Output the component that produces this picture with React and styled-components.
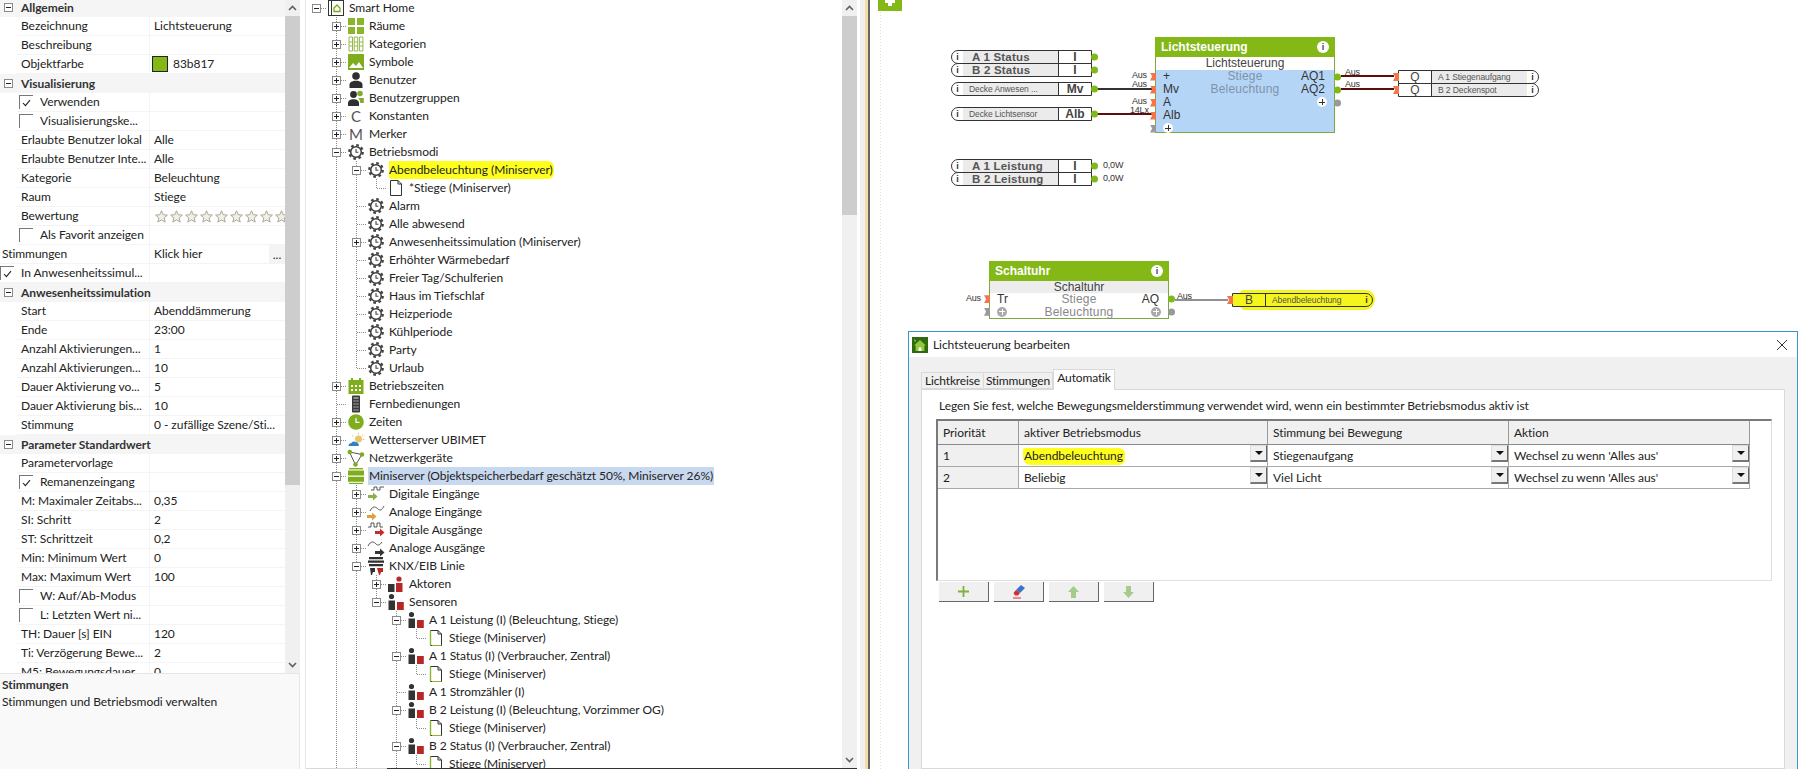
import React from "react";
import styled, { createGlobalStyle, css } from "styled-components";

const UI_FONT = `Lato, "Noto Sans", sans-serif`;
const DIAGRAM_FONT = `"Liberation Sans", Arial, sans-serif`;

const GlobalStyle = createGlobalStyle`
  html, body { margin: 0; padding: 0; background: #fff; }
  body { font-family: ${UI_FONT}; font-size: 12px; letter-spacing: -0.05px; color: #222; }
  * { box-sizing: border-box; }
`;

/* ---------- data ---------- */

const PROPS = [
  { group: "Allgemein" },
  { name: "Bezeichnung", value: "Lichtsteuerung" },
  { name: "Beschreibung" },
  { name: "Objektfarbe", value: "83b817", swatch: "#83b817" },
  { group: "Visualisierung" },
  { name: "Verwenden", check: "on" },
  { name: "Visualisierungske...", check: "off" },
  { name: "Erlaubte Benutzer lokal", value: "Alle" },
  { name: "Erlaubte Benutzer Inte...", value: "Alle" },
  { name: "Kategorie", value: "Beleuchtung" },
  { name: "Raum", value: "Stiege" },
  { name: "Bewertung", stars: 9 },
  { name: "Als Favorit anzeigen", check: "off" },
  { name: "Stimmungen", value: "Klick hier", flush: true, more: true },
  { name: "In Anwesenheitssimul...", check: "on", flush: true },
  { group: "Anwesenheitssimulation" },
  { name: "Start", value: "Abenddämmerung" },
  { name: "Ende", value: "23:00" },
  { name: "Anzahl Aktivierungen...", value: "1" },
  { name: "Anzahl Aktivierungen...", value: "10" },
  { name: "Dauer Aktivierung vo...", value: "5" },
  { name: "Dauer Aktivierung bis...", value: "10" },
  { name: "Stimmung", value: "0 - zufällige Szene/Sti..." },
  { group: "Parameter Standardwert" },
  { name: "Parametervorlage" },
  { name: "Remanenzeingang", check: "on" },
  { name: "M: Maximaler Zeitabs...", value: "0,35" },
  { name: "SI: Schritt", value: "2" },
  { name: "ST: Schrittzeit", value: "0,2" },
  { name: "Min: Minimum Wert", value: "0" },
  { name: "Max: Maximum Wert", value: "100" },
  { name: "W: Auf/Ab-Modus", check: "off" },
  { name: "L: Letzten Wert ni...", check: "off" },
  { name: "TH: Dauer [s] EIN", value: "120" },
  { name: "Ti: Verzögerung Bewe...", value: "2" },
  { name: "M5: Bewegungsdauer", value: "0" },
];

const mode = (label, extra) => ({ label, icon: "mode", ...extra });
const sensor = (label, children, cont) => ({ label, icon: "sensor", open: !!children, children, cont });
const page = { label: "Stiege (Miniserver)", icon: "docGreen" };

const TREE = {
  label: "Smart Home",
  icon: "root",
  open: true,
  children: [
    { label: "Räume", icon: "rooms", closed: true },
    { label: "Kategorien", icon: "categories", closed: true },
    { label: "Symbole", icon: "symbols", closed: true },
    { label: "Benutzer", icon: "user", closed: true },
    { label: "Benutzergruppen", icon: "users", closed: true },
    { label: "Konstanten", icon: "letterC", closed: true },
    { label: "Merker", icon: "letterM", closed: true },
    {
      label: "Betriebsmodi",
      icon: "mode",
      open: true,
      children: [
        mode("Abendbeleuchtung (Miniserver)", {
          marked: true,
          open: true,
          children: [{ label: "*Stiege (Miniserver)", icon: "doc" }],
        }),
        mode("Alarm"),
        mode("Alle abwesend"),
        mode("Anwesenheitssimulation (Miniserver)", { closed: true }),
        mode("Erhöhter Wärmebedarf"),
        mode("Freier Tag/Schulferien"),
        mode("Haus im Tiefschlaf"),
        mode("Heizperiode"),
        mode("Kühlperiode"),
        mode("Party"),
        mode("Urlaub"),
      ],
    },
    { label: "Betriebszeiten", icon: "calendar", closed: true },
    { label: "Fernbedienungen", icon: "remote" },
    { label: "Zeiten", icon: "clock", closed: true },
    { label: "Wetterserver UBIMET", icon: "weather", closed: true },
    { label: "Netzwerkgeräte", icon: "network", closed: true },
    {
      label: "Miniserver (Objektspeicherbedarf geschätzt 50%, Miniserver 26%)",
      icon: "miniserver",
      selected: true,
      open: true,
      cont: true,
      children: [
        { label: "Digitale Eingänge", icon: "digitalIn", closed: true },
        { label: "Analoge Eingänge", icon: "analogIn", closed: true },
        { label: "Digitale Ausgänge", icon: "digitalOut", closed: true },
        { label: "Analoge Ausgänge", icon: "analogOut", closed: true },
        {
          label: "KNX/EIB Linie",
          icon: "knx",
          open: true,
          cont: true,
          children: [
            { label: "Aktoren", icon: "actor", closed: true },
            {
              label: "Sensoren",
              icon: "sensor",
              open: true,
              children: [
                sensor("A 1 Leistung (I) (Beleuchtung, Stiege)", [page]),
                sensor("A 1 Status (I) (Verbraucher, Zentral)", [page]),
                sensor("A 1 Stromzähler (I)"),
                sensor("B 2 Leistung (I) (Beleuchtung, Vorzimmer OG)", [page]),
                sensor("B 2 Status (I) (Verbraucher, Zentral)", [page], true),
              ],
            },
          ],
        },
      ],
    },
  ],
};

const flatten = (node, prefix = [], isLast = false, isRoot = true) => {
  const row = { ...node, prefix, kind: isRoot ? "root" : isLast && !node.cont ? "last" : "tee" };
  const kids = node.children || [];
  const nextPrefix = isRoot ? [false] : [...prefix, !isLast || !!node.cont];
  return [row, ...kids.flatMap((k, i) => flatten(k, nextPrefix, i === kids.length - 1, false))];
};

const TREE_ROWS = flatten(TREE);

/* ---------- tree icons ---------- */

const GearClock = () => (
  <>
    <circle cx="9" cy="9" r="6.8" fill="none" stroke="#444" strokeWidth="2.2" strokeDasharray="2.7 2.64" />
    <circle cx="9" cy="9" r="5.3" fill="#fff" stroke="#3a3a3a" strokeWidth="1.5" />
    <path d="M9 6v3.2h2.4" fill="none" stroke="#444" strokeWidth="1.1" />
  </>
);

const ICONS = {
  root: (
    <>
      <rect x="1.5" y="1.5" width="15" height="15" fill="#fff" stroke="#333" />
      <rect x="4" y="1.5" width="1" height="15" fill="#333" />
      <path d="M7 9l3-3 3 3v3.5H7z" fill="#fff" stroke="#7aa81c" strokeWidth="1.3" />
    </>
  ),
  rooms: (
    <path d="M1 1h7v7H1zM10 1h7v7h-7zM1 10h7v7H1zM10 10h7v7h-7z" fill="#8ab52c" />
  ),
  categories: (
    <path d="M2 2h3.5v14H2zM7.2 2h3.5v14H7.2zM12.4 2h3.5v14h-3.5zM2 7h3.5M2 11h3.5M7.2 7h3.5M7.2 11h3.5M12.4 7h3.5M12.4 11h3.5" fill="none" stroke="#95b84e" />
  ),
  symbols: (
    <>
      <rect x="1" y="1" width="16" height="16" fill="#7fad1e" />
      <path d="M2 15l4-5 3 3 3-4 4 6z" fill="#fff" />
    </>
  ),
  user: (
    <>
      <circle cx="9" cy="5" r="3.8" fill="#2f2f2f" />
      <path d="M2.5 17v-3.2c0-2.4 2.6-4 6.5-4s6.5 1.6 6.5 4V17z" fill="#2f2f2f" />
    </>
  ),
  users: (
    <>
      <circle cx="6.5" cy="5.5" r="3.4" fill="#2f2f2f" />
      <path d="M1 17v-3c0-2.2 2.4-3.7 5.5-3.7s5.5 1.5 5.5 3.7v3z" fill="#2f2f2f" />
      <circle cx="13" cy="4.5" r="2.8" fill="#82ab2e" />
      <path d="M11 9h5.8v5h-3.6c0-2-.6-3.6-2.2-5z" fill="#82ab2e" />
    </>
  ),
  mode: <GearClock />,
  doc: (
    <path d="M3.5 1.5h7.5l3.5 3.5v11.5h-11zM11 1.5V5h3.5" fill="#fff" stroke="#333" />
  ),
  docGreen: (
    <>
      <path d="M3.5 1.5h7.5l3.5 3.5v11.5h-11zM11 1.5V5h3.5" fill="#fff" stroke="#333" />
      <path d="M3.5 1.5v15" stroke="#8ab52c" strokeWidth="1.4" />
      <path d="M5 16.5h9" stroke="#8ab52c" />
    </>
  ),
  calendar: (
    <>
      <rect x="1.5" y="3" width="15" height="14" fill="#7fad1e" />
      <path d="M5 1v3M13 1v3" stroke="#7fad1e" strokeWidth="2" />
      <path d="M4 8h2v2H4zM8 8h2v2H8zM12 8h2v2h-2zM4 12h2v2H4zM8 12h2v2H8zM12 12h2v2h-2z" fill="#fff" />
    </>
  ),
  remote: (
    <>
      <rect x="5" y="0.5" width="8" height="17" rx="0.8" fill="#3a3a3a" />
      <path d="M6.5 3h5M6.5 6h1.2M8.4 6h1.2M10.3 6h1.2M6.5 9h1.2M8.4 9h1.2M10.3 9h1.2M6.5 12h1.2M8.4 12h1.2M10.3 12h1.2M6.5 15h1.2M8.4 15h1.2M10.3 15h1.2" stroke="#ddd" />
    </>
  ),
  clock: (
    <>
      <circle cx="9" cy="9" r="7.8" fill="#7fad1e" />
      <path d="M9 5v4.4h3.4" fill="none" stroke="#fff" strokeWidth="1.2" />
    </>
  ),
  weather: (
    <>
      <circle cx="11.5" cy="8" r="3.5" fill="#e8c56a" />
      <path d="M11.5 2v1.5M16.5 4l-1.2 1M17.5 8.5h-1.7M5 4.5l1.2 1" stroke="#e8c56a" />
      <path d="M1.5 15c0-2 1.5-3 3-3 .8-1.6 3-2 4.3-.8 1.9-.3 3.2 1.4 2.9 3.8z" fill="#2f80c4" />
    </>
  ),
  network: (
    <>
      <path d="M2.5 3l12.5 2.5-6.5 10.5z" fill="none" stroke="#555" />
      <circle cx="2.8" cy="3" r="2.3" fill="#7fad1e" />
      <circle cx="15" cy="5.5" r="2.3" fill="#7fad1e" />
      <circle cx="8.5" cy="15.5" r="2.3" fill="#7fad1e" />
    </>
  ),
  miniserver: (
    <>
      <path d="M2 1h14v1.4H2z" fill="#7fad1e" />
      <path d="M1 3.5h16v5H1zM1 9.7h16v5H1z" fill="#7fad1e" />
      <path d="M2 15.8h14v1.2H2z" fill="#7fad1e" />
    </>
  ),
  digitalIn: (
    <>
      <path d="M4 5h3V2h3v3h3V2h4" fill="none" stroke="#555" />
      <path d="M1 10h5V7.5l4.5 4-4.5 4V13H1z" fill="#8cb042" />
    </>
  ),
  analogIn: (
    <>
      <path d="M3 8c3-6 6-4 8-2s4 1 6-3" fill="none" stroke="#555" />
      <path d="M0 12h5V9.5l4.5 4-4.5 4V15H0z" fill="#dda23a" />
    </>
  ),
  digitalOut: (
    <>
      <path d="M1 6h3V2h3v4h3V2h3v4h3" fill="none" stroke="#555" />
      <path d="M8 10h5V7.5l4.5 4-4.5 4V13H8z" fill="#c62c2c" />
    </>
  ),
  analogOut: (
    <>
      <path d="M1 7c3-6 6-4 8-2s4 1 6-2" fill="none" stroke="#555" />
      <path d="M8 12h5V9.5l4.5 4-4.5 4V15H8z" fill="#333" />
    </>
  ),
  knx: (
    <>
      <path d="M2 0h14v2.2H2zM1 3.4h16v2.4H1zM2 7h14v2.2H2z" fill="#2f2f2f" />
      <path d="M3 11h5v4H6l-1 3H4z" fill="#2f2f2f" />
      <path d="M10 11h6v4h-2l-1 3h-1z" fill="#b82626" />
    </>
  ),
  actor: (
    <>
      <path d="M1 9h6.5v8H1z" fill="#333" />
      <circle cx="12" cy="4" r="2.6" fill="#b82626" />
      <path d="M9 8h6.5v9H9z" fill="#b82626" />
    </>
  ),
  sensor: (
    <>
      <circle cx="4.5" cy="3.5" r="2.6" fill="#333" />
      <path d="M1.5 7.5H8V17H1.5z" fill="#333" />
      <path d="M10 9h6.8v8H10z" fill="#b82626" />
    </>
  ),
};

const Svg = styled.svg`
  display: block;
  flex: none;
`;

const TreeIcon = ({ name }) => {
  if (name === "letterC" || name === "letterM") {
    return <IconLetter>{name === "letterC" ? "C" : "M"}</IconLetter>;
  }
  return (
    <IconCell>
      <Svg width="18" height="18" viewBox="0 0 18 18">
        {ICONS[name]}
      </Svg>
    </IconCell>
  );
};

/* ---------- left panel ---------- */

const Page = styled.div`
  width: 1798px;
  height: 769px;
  display: flex;
  overflow: hidden;
  background: #fff;
`;

const LeftPane = styled.div`
  width: 306px;
  flex: none;
  border-right: 1px solid #e6e6e6;
  padding-right: 5px;
  display: flex;
  flex-direction: column;
`;

const PropsArea = styled.div`
  height: 673px;
  display: flex;
`;

const PropsList = styled.div`
  width: 285px;
  overflow: hidden;
`;

const PropsInner = styled.div`
  margin-top: -2px;
`;

const PropRow = styled.div`
  height: 19px;
  display: grid;
  grid-template-columns: 17px 132px 1fr;
  align-items: center;
  line-height: 18px;
  white-space: nowrap;
  ${(p) =>
    p.$group &&
    css`
      background: #f5f5f5;
      font-weight: 700;
      color: #333;
      grid-template-columns: 17px 1fr;
    `}
`;

const PropName = styled.div`
  height: 19px;
  padding-left: ${(p) => (p.$check ? "2px" : "4px")};
  display: flex;
  align-items: center;
  gap: 7px;
  border-bottom: 1px solid #f4f4f4;
  overflow: hidden;
  ${(p) =>
    p.$flush &&
    css`
      grid-column: 1 / 3;
      padding-left: ${p.$check ? "0" : "2px"};
    `}
`;

const PropValue = styled.div`
  height: 19px;
  padding-left: 4px;
  border-left: 1px solid #f4f4f4;
  border-bottom: 1px solid #f4f4f4;
  display: flex;
  align-items: center;
  gap: 5px;
  overflow: hidden;
`;

const GroupTitle = styled.div`
  padding-left: 4px;
`;

const Gutter = styled.div`
  display: flex;
  align-items: center;
  padding-left: 3px;
`;

const Swatch = styled.span`
  width: 16px;
  height: 16px;
  margin-left: -2px;
  flex: none;
  border: 1px solid #222;
  background: ${(p) => p.$color};
`;

const MoreButton = styled.span`
  margin-left: auto;
  width: 16px;
  height: 19px;
  background: #f4f4f4;
  line-height: 20px;
  text-align: center;
`;

const Stars = styled.div`
  display: flex;
  gap: 2px;
  margin-left: 1px;
`;

const CheckBox = styled.span`
  width: 14px;
  height: 14px;
  flex: none;
  border-top: 1px solid #777;
  border-left: 1px solid #777;
  display: flex;
  align-items: center;
  justify-content: center;
`;

const Tick = () => (
  <Svg width="9" height="8" viewBox="0 0 9 8">
    <path d="M1 4l2.4 2.6L8 1.2" fill="none" stroke="#222" strokeWidth="1.1" />
  </Svg>
);

const Star = () => (
  <Svg width="13" height="13" viewBox="0 0 13 13">
    <path
      d="M6.5.8l1.7 3.9 4.2.4-3.2 2.8 1 4.2-3.7-2.2-3.7 2.2 1-4.2L.6 5.1l4.2-.4z"
      fill="#f1efe6"
      stroke="#aaa89a"
    />
  </Svg>
);

const ScrollTrack = styled.div`
  width: 15px;
  flex: none;
  height: 100%;
  background: #f0f0f0;
  display: flex;
  flex-direction: column;
`;

const ScrollArrow = styled.div`
  height: 16px;
  flex: none;
  display: flex;
  align-items: center;
  justify-content: center;
  margin-top: ${(p) => (p.$end ? "auto" : "0")};
`;

const ScrollThumb = styled.div`
  height: ${(p) => p.$h}px;
  background: #cdcdcd;
`;

const Chevron = ({ up }) => (
  <Svg width="9" height="6" viewBox="0 0 9 6">
    <path d={up ? "M1 5l3.5-3.5L8 5" : "M1 1l3.5 3.5L8 1"} fill="none" stroke="#606060" strokeWidth="1.6" />
  </Svg>
);

const Scrollbar = ({ thumb }) => (
  <ScrollTrack>
    <ScrollArrow>
      <Chevron up />
    </ScrollArrow>
    <ScrollThumb $h={thumb} />
    <ScrollArrow $end>
      <Chevron />
    </ScrollArrow>
  </ScrollTrack>
);

const DescBox = styled.div`
  flex: 1;
  width: 300px;
  background: #f9f9f9;
  border-top: 1px solid #e6e6e6;
  border-right: 1px solid #e6e6e6;
  padding: 2px 2px;
  line-height: 17px;
`;

const DescTitle = styled.div`
  font-weight: 700;
  color: #333;
`;

/* ---------- tree ---------- */

const dotsV = "repeating-linear-gradient(to bottom,#8c8c8c 0 1px,transparent 1px 2px)";
const dotsH = "repeating-linear-gradient(to right,#8c8c8c 0 1px,transparent 1px 2px)";

const guideStyles = {
  blank: css``,
  pipe: css`
    background: ${dotsV} no-repeat 10px 0 / 1px 100%;
  `,
  tee: css`
    background:
      ${dotsV} no-repeat 10px 0 / 1px 100%,
      ${dotsH} no-repeat 11px 9px / 9px 1px;
  `,
  last: css`
    background:
      ${dotsV} no-repeat 10px 0 / 1px 9px,
      ${dotsH} no-repeat 11px 9px / 9px 1px;
  `,
  root: css`
    background: ${dotsH} no-repeat 11px 9px / 9px 1px;
  `,
};

const TreePane = styled.div`
  width: 551px;
  flex: none;
  display: flex;
  height: 769px;
  border-bottom: 1px solid;
  border-image: linear-gradient(to right, #d8d8d8 0 82px, #333 82px) 1;
`;

const TreeList = styled.div`
  flex: 1;
  overflow: hidden;
`;

const TreeInner = styled.div`
  margin-top: -1px;
`;

const TreeRow = styled.div`
  height: 18px;
  display: flex;
  align-items: center;
  white-space: nowrap;
`;

const Guide = styled.div`
  width: 20px;
  height: 18px;
  flex: none;
  display: flex;
  align-items: center;
  justify-content: center;
  ${(p) => guideStyles[p.$kind]}
`;

const Expander = styled.span`
  width: 9px;
  height: 9px;
  margin-left: 1px;
  border: 1px solid #8a8a8a;
  background-color: #fff;
  background-image: linear-gradient(#222, #222)
    ${(p) => (p.$closed ? ", linear-gradient(#222, #222)" : "")};
  background-repeat: no-repeat;
  background-position: center, center;
  background-size: 5px 1px ${(p) => (p.$closed ? ", 1px 5px" : "")};
`;

const IconCell = styled.div`
  width: 20px;
  height: 18px;
  flex: none;
  display: flex;
  align-items: center;
  justify-content: center;
`;

const IconLetter = styled(IconCell)`
  font-size: 15px;
  color: #555;
`;

const TreeLabel = styled.span`
  margin-left: 3px;
  line-height: 18px;
  ${(p) =>
    p.$selected &&
    css`
      background: #c8d8ef;
      margin-left: 2px;
      padding: 0 1px;
    `}
  ${(p) =>
    p.$marked &&
    css`
      background: #ffff1e;
      border-radius: 0 6px 6px 3px;
      margin-left: 3px;
      padding-right: 1px;
    `}
`;

const Splitter = styled.div`
  width: 14px;
  flex: none;
  background: linear-gradient(
    to right,
    #fff 0 3px,
    #f0f0f0 3px 8px,
    #f6dca6 8px 11px,
    #666 11px 13px,
    #fff 13px
  );
`;

/* ---------- right side: diagram ---------- */

const RightPane = styled.div`
  flex: 1;
  height: 769px;
  display: flex;
  flex-direction: column;
  overflow: hidden;
  background: repeating-linear-gradient(to bottom, #cfe6dc 0 1px, transparent 1px 3px) no-repeat 9px 0 / 1px 100%;
`;

const Canvas = styled.div`
  position: relative;
  height: 331px;
  flex: none;
  font-family: ${DIAGRAM_FONT};
  letter-spacing: 0;
`;

const AddButton = styled.div`
  position: absolute;
  left: 7px;
  top: 0;
  width: 24px;
  height: 11px;
  background: #83b817;
  overflow: hidden;
  display: flex;
  justify-content: center;
`;

const AddCross = styled.span`
  width: 10px;
  height: 6px;
  background:
    linear-gradient(#fff, #fff) center 0 / 4px 6px no-repeat,
    linear-gradient(#fff, #fff) center 0 / 10px 3px no-repeat;
`;

const Wires = styled.svg`
  position: absolute;
  left: 0;
  top: 0;
`;

const Note = styled.span`
  position: absolute;
  left: ${(p) => p.$x}px;
  top: ${(p) => p.$y}px;
  font-size: 9px;
  line-height: 10px;
  color: #333;
  letter-spacing: -0.2px;
`;

const RefBox = styled.div`
  position: absolute;
  left: ${(p) => p.$x}px;
  top: ${(p) => p.$y}px;
  width: 141px;
  height: ${(p) => p.$h || 14}px;
  display: flex;
  flex-direction: ${(p) => (p.$out ? "row-reverse" : "row")};
  border: 1px solid #333;
  border-radius: ${(p) => (p.$out ? "0 8px 8px 0" : "8px 0 0 8px")};
  background: ${(p) => (p.$mark ? "#f4f41e" : "#fff")};
`;

const RefCap = styled.div`
  width: 11px;
  flex: none;
  display: flex;
  align-items: center;
  justify-content: center;
  font-size: 9px;
  font-weight: 700;
  color: #333;
`;

const RefName = styled.div`
  flex: 1;
  min-width: 0;
  background: ${(p) => (p.$mark ? "transparent" : "#ebebeb")};
  padding-left: ${(p) => (p.$big ? 9 : 6)}px;
  font-size: ${(p) => (p.$big ? 11.5 : 8.5)}px;
  font-weight: ${(p) => (p.$big ? 700 : 400)};
  letter-spacing: ${(p) => (p.$big ? "0.2px" : "-0.1px")};
  color: #555;
  line-height: 12px;
  white-space: nowrap;
  overflow: hidden;
`;

const RefCode = styled.div`
  width: 33px;
  flex: none;
  border-left: 1px solid #333;
  text-align: center;
  font-size: 12px;
  font-weight: ${(p) => (p.$light ? 400 : 700)};
  line-height: 12px;
  color: #444;
  ${(p) =>
    p.$out &&
    css`
      border-left: none;
      border-right: 1px solid #333;
    `}
`;

const pinColor = { green: "#7fb81c", gray: "#999", orange: "#f2764a", grayTag: "#999" };

const Pin = styled.span`
  position: absolute;
  width: ${(p) => (p.$kind === "orange" || p.$kind === "grayTag" ? 6 : 7)}px;
  height: ${(p) => (p.$kind === "orange" || p.$kind === "grayTag" ? 8 : 7)}px;
  top: 50%;
  transform: translateY(-50%);
  background: ${(p) => pinColor[p.$kind]};
  ${(p) => (p.$side === "left" ? "left: -6px;" : "right: -7px;")}
  ${(p) =>
    p.$kind === "orange" || p.$kind === "grayTag"
      ? "clip-path: polygon(0 0, 100% 0, 100% 100%, 0 100%, 35% 50%);"
      : "border-radius: 50%;"}
`;

const Reference = ({ x, y, h, out, name, big, code, pin, mark, light }) => (
  <RefBox $x={x} $y={y} $h={h} $out={out} $mark={mark}>
    <RefCap>i</RefCap>
    <RefName $big={big} $mark={mark}>
      {name}
    </RefName>
    <RefCode $out={out} $light={light}>
      {code}
    </RefCode>
    <Pin $kind={pin} $side={out ? "left" : "right"} />
  </RefBox>
);

const BlockBox = styled.div`
  position: absolute;
  left: ${(p) => p.$x}px;
  top: ${(p) => p.$y}px;
  width: 180px;
  height: ${(p) => p.$h}px;
  border: 1px solid #7fa83a;
  background: ${(p) => p.$body};
  display: flex;
  flex-direction: column;
`;

const BlockHead = styled.div`
  height: 20px;
  flex: none;
  margin: -1px -1px 0;
  padding: 0 6px;
  background: #83b817;
  color: #fff;
  font-size: 12px;
  font-weight: 700;
  display: flex;
  align-items: center;
  justify-content: space-between;
`;

const InfoDot = styled.span`
  width: 12px;
  height: 12px;
  border-radius: 50%;
  background: #fff;
  color: #444;
  font-size: 9px;
  line-height: 12px;
  text-align: center;
`;

const BlockSub = styled.div`
  height: ${(p) => p.$h}px;
  flex: none;
  background: ${(p) => p.$bg};
  text-align: center;
  font-size: 12px;
  line-height: ${(p) => p.$h}px;
  color: #444;
`;

const BlockRow = styled.div`
  position: relative;
  height: ${(p) => p.$h}px;
  flex: none;
  display: grid;
  grid-template-columns: 40px 1fr 40px;
  align-items: center;
  font-size: 12px;
  line-height: ${(p) => p.$h}px;
  color: #333;
`;

const Left = styled.span`
  padding-left: 7px;
`;

const Mid = styled.span`
  text-align: center;
  color: ${(p) => p.$color};
  letter-spacing: 0.2px;
`;

const Right = styled.span`
  text-align: right;
  padding-right: 9px;
`;

const PlusDot = styled.span`
  display: inline-block;
  width: 10px;
  height: 10px;
  border-radius: 50%;
  vertical-align: -1px;
  margin-right: ${(p) => (p.$end ? -2 : 0)}px;
  background:
    linear-gradient(${(p) => p.$cross}, ${(p) => p.$cross}) center / 6px 1px no-repeat,
    linear-gradient(${(p) => p.$cross}, ${(p) => p.$cross}) center / 1px 6px no-repeat,
    ${(p) => p.$color};
`;

const Block = ({ x, y, h, title, sub, subBg, body, midColor, dot, cross, rowH, rows }) => (
  <BlockBox $x={x} $y={y} $h={h} $body={body}>
    <BlockHead>
      {title}
      <InfoDot>i</InfoDot>
    </BlockHead>
    <BlockSub $h={subBg === "#fff" ? 13 : 12} $bg={subBg}>
      {sub}
    </BlockSub>
    {rows.map((r, i) => (
      <BlockRow key={i} $h={rowH}>
        {r.lp && <Pin $kind={r.lp} $side="left" />}
        <Left>{r.l === "+dot" ? <PlusDot $color={dot} $cross={cross} /> : r.l}</Left>
        <Mid $color={midColor}>{r.m}</Mid>
        <Right>{r.r === "+dot" ? <PlusDot $end $color={dot} $cross={cross} /> : r.r}</Right>
        {r.rp && <Pin $kind={r.rp} $side="right" />}
      </BlockRow>
    ))}
  </BlockBox>
);

const MarkerBlob = styled.div`
  position: absolute;
  left: 369px;
  top: 290px;
  width: 135px;
  height: 20px;
  background: #f4f41e;
  border-radius: 4px 10px 12px 6px;
`;

const Diagram = () => (
  <Canvas>
    <AddButton>
      <AddCross />
    </AddButton>
    <Wires width="927" height="331">
      <path d="M225 89h56" stroke="#333" strokeWidth="2" />
      <path d="M225 114h56" stroke="#5e0d0d" strokeWidth="2" />
      <path d="M470 76h53M470 89h53" stroke="#5e0d0d" strokeWidth="2" />
      <path d="M304 300h53" stroke="#222" strokeWidth="1" />
    </Wires>

    <Reference x={80} y={50} name="A 1 Status" big code="I" pin="green" />
    <Reference x={80} y={63} name="B 2 Status" big code="I" pin="green" />
    <Reference x={80} y={82} name="Decke Anwesen ..." code="Mv" pin="green" />
    <Reference x={80} y={107} name="Decke Lichtsensor" code="Alb" pin="green" />
    <Reference x={80} y={159} name="A 1 Leistung" big code="I" pin="green" />
    <Reference x={80} y={172} name="B 2 Leistung" big code="I" pin="green" />
    <Note $x={232} $y={160}>0,0W</Note>
    <Note $x={232} $y={173}>0,0W</Note>

    <Note $x={261} $y={70}>Aus</Note>
    <Note $x={261} $y={79}>Aus</Note>
    <Note $x={261} $y={96}>Aus</Note>
    <Note $x={259} $y={105}>14Lx</Note>

    <Block
      x={284}
      y={37}
      h={96}
      title="Lichtsteuerung"
      sub="Lichtsteuerung"
      subBg="#fff"
      body="#b5d5f7"
      midColor="#7f93a8"
      dot="#fff"
      cross="#333"
      rowH={13}
      rows={[
        { l: "+", m: "Stiege", r: "AQ1", lp: "orange", rp: "green" },
        { l: "Mv", m: "Beleuchtung", r: "AQ2", lp: "orange", rp: "green" },
        { l: "A", r: "+dot", lp: "orange", rp: "gray" },
        { l: "Alb", lp: "orange" },
        { l: "+dot", lp: "grayTag" },
      ]}
    />
    <Note $x={474} $y={67}>Aus</Note>
    <Note $x={474} $y={79}>Aus</Note>

    <Reference x={527} y={70} out light name="A 1 Stiegenaufgang" code="Q" pin="orange" />
    <Reference x={527} y={83} out light name="B 2 Deckenspot" code="Q" pin="orange" />

    <Note $x={95} $y={293}>Aus</Note>
    <Block
      x={118}
      y={261}
      h={58}
      title="Schaltuhr"
      sub="Schaltuhr"
      subBg="#ededed"
      body="#fff"
      midColor="#888"
      dot="#aaa"
      cross="#fff"
      rowH={12.5}
      rows={[
        { l: "Tr", m: "Stiege", r: "AQ", lp: "orange", rp: "green" },
        { l: "+dot", m: "Beleuchtung", r: "+dot", lp: "grayTag", rp: "gray" },
      ]}
    />
    <Note $x={306} $y={291}>Aus</Note>

    <MarkerBlob />
    <Reference x={361} y={293} h={14} out light mark name="Abendbeleuchtung" code="B" pin="orange" />
  </Canvas>
);

/* ---------- dialog ---------- */

const Dialog = styled.div`
  margin-left: 37px;
  flex: 1;
  min-height: 0;
  background: #f0f0f0;
  border: 1px solid #3a96c8;
  border-bottom: none;
  display: flex;
  flex-direction: column;
`;

const DialogTitle = styled.div`
  height: 25px;
  flex: none;
  background: #fff;
  padding: 0 9px 0 3px;
  display: flex;
  align-items: center;
  gap: 5px;
`;

const CloseMark = styled.svg`
  margin-left: auto;
`;

const TabStrip = styled.div`
  display: flex;
  align-items: flex-end;
  height: 32px;
  flex: none;
  padding-left: 12px;
`;

const Tab = styled.div`
  width: ${(p) => p.$w}px;
  height: ${(p) => (p.$active ? 21 : 17)}px;
  text-align: center;
  letter-spacing: -0.15px;
  line-height: 16px;
  background: ${(p) => (p.$active ? "#fff" : "#f0f0f0")};
  border: 1px solid #d9d9d9;
  border-left: ${(p) => (p.$first || p.$active ? "1px solid #d9d9d9" : "none")};
  border-bottom: ${(p) => (p.$active ? "none" : "1px solid #d9d9d9")};
  position: relative;
  top: ${(p) => (p.$active ? 1 : 0)}px;
`;

const TabPage = styled.div`
  flex: 1;
  margin: 0 12px;
  background: #fff;
  border: 1px solid #d9d9d9;
  padding: 7px 12px 0 14px;
`;

const Legend = styled.div`
  margin-left: 3px;
  height: 22px;
  line-height: 17px;
`;

const TableFrame = styled.div`
  height: 162px;
  border-top: 2px solid #7a7a7a;
  border-left: 2px solid #7a7a7a;
  border-right: 1px solid #dfdfdf;
  border-bottom: 1px solid #dfdfdf;
`;

const TableGrid = styled.div`
  display: grid;
  grid-template-columns: 81px 249px 241px 241px;
  grid-template-rows: 24px 22px 22px;
  width: fit-content;
`;

const HeadCell = styled.div`
  background: #f0f0f0;
  border-right: 1px solid #9a9a9a;
  border-bottom: 1px solid #8a8a8a;
  padding-left: 5px;
  line-height: 24px;
`;

const Cell = styled.div`
  background: ${(p) => (p.$fixed ? "#f0f0f0" : "#fff")};
  border-right: 1px solid #a8a8a8;
  border-bottom: 1px solid #a8a8a8;
  padding-left: 5px;
  line-height: 22px;
  display: flex;
  justify-content: space-between;
  white-space: nowrap;
`;

const TableRow = styled.div`
  display: contents;
`;

const Marked = styled.span`
  background: #ffff1e;
  margin-left: -1px;
  padding: 0 2px 0 1px;
  height: 17px;
  margin-top: 3px;
  line-height: 15px;
  border-radius: 2px 6px 6px 8px;
`;

const Dropdown = styled.span`
  width: 17px;
  height: 17px;
  flex: none;
  background: #f0f0f0;
  border-right: 1px solid #666;
  border-bottom: 2px solid #777;
  border-left: 1px solid #ddd;
  border-top: 1px solid #ddd;
  display: flex;
  align-items: center;
  justify-content: center;
  &::after {
    content: "";
    border-left: 4px solid transparent;
    border-right: 4px solid transparent;
    border-top: 4px solid #111;
  }
`;

const ButtonBar = styled.div`
  display: flex;
  gap: 5px;
  margin-left: 3px;
  margin-top: 1px;
`;

const ToolButton = styled.div`
  width: 50px;
  height: 20px;
  background: #f0f0f0;
  border-right: 1px solid #666;
  border-bottom: 1px solid #666;
  display: flex;
  align-items: center;
  justify-content: center;
`;

const TABLE = [
  { p: "1", mode: "Abendbeleuchtung", mood: "Stiegenaufgang", marked: true },
  { p: "2", mode: "Beliebig", mood: "Viel Licht" },
];

const SettingsDialog = () => (
  <Dialog>
    <DialogTitle>
      <Svg width="16" height="16" viewBox="0 0 16 16">
        <rect width="16" height="16" fill="#2f6a0e" />
        <path d="M8 3l6 5.5h-1.6V14H3.6V8.5H2z" fill="#8fc83a" />
        <path d="M6.6 14v-3.5h2.8V14z" fill="#fff" />
        <path d="M2 2l2 2-1 1z" fill="#c9e38a" />
      </Svg>
      Lichtsteuerung bearbeiten
      <CloseMark width="12" height="12" viewBox="0 0 12 12">
        <path d="M1 1l10 10M11 1L1 11" stroke="#333" strokeWidth="1" />
      </CloseMark>
    </DialogTitle>
    <TabStrip>
      <Tab $first $w={63}>Lichtkreise</Tab>
      <Tab $w={69}>Stimmungen</Tab>
      <Tab $active $w={62}>Automatik</Tab>
    </TabStrip>
    <TabPage>
      <Legend>
        Legen Sie fest, welche Bewegungsmelderstimmung verwendet wird, wenn ein bestimmter Betriebsmodus aktiv ist
      </Legend>
      <TableFrame>
        <TableGrid>
          <TableRow>
            <HeadCell>Priorität</HeadCell>
            <HeadCell>aktiver Betriebsmodus</HeadCell>
            <HeadCell>Stimmung bei Bewegung</HeadCell>
            <HeadCell>Aktion</HeadCell>
          </TableRow>
          {TABLE.map((row) => (
            <TableRow key={row.p}>
              <Cell $fixed>{row.p}</Cell>
              <Cell>
                {row.marked ? <Marked>{row.mode}</Marked> : row.mode}
                <Dropdown />
              </Cell>
              <Cell>
                {row.mood}
                <Dropdown />
              </Cell>
              <Cell>
                Wechsel zu wenn 'Alles aus'
                <Dropdown />
              </Cell>
            </TableRow>
          ))}
        </TableGrid>
      </TableFrame>
      <ButtonBar>
        <ToolButton>
          <Svg width="13" height="13" viewBox="0 0 13 13">
            <path d="M6.5 1v11M1 6.5h11" stroke="#7fb23a" strokeWidth="1.8" />
          </Svg>
        </ToolButton>
        <ToolButton>
          <Svg width="16" height="15" viewBox="0 0 16 15">
            <path d="M5 6l5-5 4 3-5 5z" fill="#3a72c8" />
            <path d="M5 6l4 3-2 2.5H4L2.5 9z" fill="#d82b35" />
            <path d="M2 14h8" stroke="#d82b35" />
          </Svg>
        </ToolButton>
        <ToolButton>
          <Svg width="13" height="14" viewBox="0 0 13 14">
            <path d="M6.5 1l5.5 6H9v6H4V7H1z" fill="#a5cc8a" />
          </Svg>
        </ToolButton>
        <ToolButton>
          <Svg width="13" height="14" viewBox="0 0 13 14">
            <path d="M6.5 13L12 7H9V1H4v6H1z" fill="#a5cc8a" />
          </Svg>
        </ToolButton>
      </ButtonBar>
    </TabPage>
  </Dialog>
);

/* ---------- page ---------- */

const PropertyRow = ({ row }) => {
  if (row.group) {
    return (
      <PropRow $group>
        <Gutter>
          <Expander />
        </Gutter>
        <GroupTitle>{row.group}</GroupTitle>
      </PropRow>
    );
  }
  return (
    <PropRow>
      {!row.flush && <div />}
      <PropName $check={!!row.check} $flush={row.flush}>
        {row.check && <CheckBox>{row.check === "on" && <Tick />}</CheckBox>}
        {row.name}
      </PropName>
      <PropValue>
        {row.swatch && <Swatch $color={row.swatch} />}
        {row.stars ? (
          <Stars>
            {Array.from({ length: row.stars }, (_, i) => (
              <Star key={i} />
            ))}
          </Stars>
        ) : (
          row.value
        )}
        {row.more && <MoreButton>...</MoreButton>}
      </PropValue>
    </PropRow>
  );
};

export default function App() {
  return (
    <>
      <GlobalStyle />
      <Page>
        <LeftPane>
          <PropsArea>
            <PropsList>
              <PropsInner>
                {PROPS.map((row, i) => (
                  <PropertyRow key={i} row={row} />
                ))}
              </PropsInner>
            </PropsList>
            <Scrollbar thumb={469} />
          </PropsArea>
          <DescBox>
            <DescTitle>Stimmungen</DescTitle>
            Stimmungen und Betriebsmodi verwalten
          </DescBox>
        </LeftPane>

        <TreePane>
          <TreeList>
            <TreeInner>
              {TREE_ROWS.map((row, i) => (
                <TreeRow key={i}>
                  {row.prefix.map((on, j) => (
                    <Guide key={j} $kind={on ? "pipe" : "blank"} />
                  ))}
                  <Guide $kind={row.kind}>
                    {(row.open || row.closed) && <Expander $closed={row.closed} />}
                  </Guide>
                  <TreeIcon name={row.icon} />
                  <TreeLabel $selected={row.selected} $marked={row.marked}>
                    {row.label}
                  </TreeLabel>
                </TreeRow>
              ))}
            </TreeInner>
          </TreeList>
          <Scrollbar thumb={199} />
        </TreePane>

        <Splitter />

        <RightPane>
          <Diagram />
          <SettingsDialog />
        </RightPane>
      </Page>
    </>
  );
}
